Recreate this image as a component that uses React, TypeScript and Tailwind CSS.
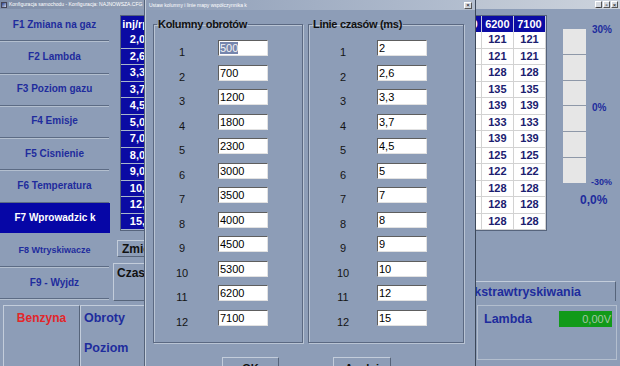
import React from 'react';

const rpm = [500, 700, 1200, 1800, 2300, 3000, 3500, 4000, 4500, 5300, 6200, 7100];
const inj = ['2,00', '2,60', '3,30', '3,70', '4,50', '5,00', '7,00', '8,00', '9,00', '10,0', '12,0', '15,0'];
const base = [121, 121, 128, 135, 139, 133, 139, 125, 122, 128, 128, 128];
const times = ['2', '2,6', '3,3', '3,7', '4,5', '5', '7', '8', '9', '10', '12', '15'];

const menu = [
  { label: 'F1 Zmiana na gaz', size: 'text-[10px]' },
  { label: 'F2 Lambda', size: 'text-[10px]' },
  { label: 'F3 Poziom gazu', size: 'text-[10px]' },
  { label: 'F4 Emisje', size: 'text-[10px]' },
  { label: 'F5 Cisnienie', size: 'text-[10px]' },
  { label: 'F6 Temperatura', size: 'text-[10px]' },
  { label: 'F7 Wprowadzic k', size: 'text-[10px]', active: true },
  { label: 'F8 Wtryskiwacze', size: 'text-[9px]' },
  { label: 'F9 - Wyjdz', size: 'text-[10px]' },
];

const TitleBar = () => (
  <div className="h-[9px] flex items-center bg-linear-to-r from-[#7e8da7] via-[#aab5c6] to-[#ccd3dd] pl-[1px] pr-[2px]">
    <span className="w-[6px] h-[6px] bg-linear-to-br from-[#2a3f8f] to-[#d8dde6] border border-[#445]" />
    <span className="ml-[2px] text-[5px] leading-none text-white whitespace-nowrap">
      Konfiguracja samochodu - Konfiguracja: NAJNOWSZA.CFG
    </span>
    <div className="ml-auto flex gap-px">
      {['_', '▫', '×'].map((g) => (
        <span
          key={g}
          className="w-[7px] h-[7px] flex items-center justify-center bg-[#d4d8de] border border-t-white border-l-white border-r-[#555] border-b-[#555] text-[6px] leading-none text-black"
        >
          {g}
        </span>
      ))}
    </div>
  </div>
);

const MapTable = () => (
  <div className="w-[427px] border border-[#56647c] bg-[#8d9db7]">
    <div className="grid grid-cols-[40px_repeat(12,minmax(0,1fr))] text-[11px] leading-none font-bold">
      <div className="h-[16px] flex items-center justify-center bg-[#0b0ba3] text-white border-r border-[#9fb0c8] whitespace-nowrap overflow-hidden">
        inj/rpm
      </div>
      {rpm.map((r) => (
        <div
          key={r}
          className="h-[16px] flex items-center justify-center bg-[#0b0ba3] text-white border-r border-[#c9cde0]"
        >
          {r}
        </div>
      ))}
      {inj.map((v, i) => (
        <React.Fragment key={v}>
          <div className="h-[16.5px] flex items-center justify-center bg-[#0b0ba3] text-white border-r border-b border-[#a9b6cc]">
            {v}
          </div>
          {rpm.map((r, j) => (
            <div
              key={r}
              className="h-[16.5px] flex items-center justify-center bg-white text-[#1b2070] border-r border-b border-[#d2d2d2]"
            >
              {j >= 9 ? base[i] : base[i] - (10 - j) * 3}
            </div>
          ))}
        </React.Fragment>
      ))}
    </div>
  </div>
);

const Gauge = () => (
  <div className="ml-[16px] mt-[8px] flex flex-col">
    <div className="flex items-start">
      <div className="mt-[6px] w-[23px] h-[154px] flex flex-col bg-[#e6e6e6]">
        {[0, 1, 2, 3, 4, 5].map((s) => (
          <div key={s} className="flex-1 border-b border-[#8e98a8] last:border-b-0" />
        ))}
      </div>
      <div className="ml-[6px] h-[166px] flex flex-col justify-between text-[#1e2c9d] font-bold leading-[14px]">
        <span className="text-[10px]">30%</span>
        <span className="text-[10px] pt-[3px]">0%</span>
        <span className="text-[9px] -ml-px">-30%</span>
      </div>
    </div>
    <div className="mt-[4px] pl-[17px] text-[12px] leading-[14px] font-bold text-[#1e2c9d]">0,0%</div>
  </div>
);

const Raised = 'border border-t-[#c3cddb] border-l-[#c3cddb] border-r-[#56647a] border-b-[#56647a]';

const Field = ({ value, selected }: { value: string; selected?: boolean }) => (
  <div className="w-[50px] h-[16px] bg-white border border-t-[#5e5e5e] border-l-[#5e5e5e] border-r-[#e2e2e2] border-b-[#e2e2e2] pl-[1px] text-[11px] leading-[14px] text-black">
    {selected ? <span className="bg-[#7686ad] text-[#f4f4f4]">{value}</span> : value}
  </div>
);

const Group = ({
  title,
  values,
  width,
  labelWidth,
}: {
  title: string;
  values: string[];
  width: string;
  labelWidth: string;
}) => (
  <fieldset
    className={`${width} h-[325px] border border-[#5b6982] shadow-[inset_1px_1px_0_#b9c4d4,1px_1px_0_#b9c4d4] p-0 m-0`}
  >
    <legend className="ml-[3px] px-px text-[11px] leading-[13px] font-bold text-[#111] tracking-[-0.3px]">{title}</legend>
    <div className="pt-[9px] flex flex-col">
      {values.map((v, i) => (
        <div key={i} className="h-[24.5px] flex items-start">
          <span className={`${labelWidth} pt-[5px] text-center text-[11px] leading-[14px] text-[#141414]`}>{i + 1}</span>
          <Field value={v} selected={i === 0 && title.startsWith('Kol')} />
        </div>
      ))}
    </div>
  </fieldset>
);

const SettingsDialog = () => (
  <div className="absolute left-[145px] top-0 w-[331px] h-[390px] flex flex-col bg-[#8d9db7] border-l border-l-[#c4cedb] border-r border-r-[#3c485a] shadow-[-1px_0_0_#55637a]">
    <div className="h-[10px] flex items-center bg-linear-to-r from-[#8f9eb7] to-[#b4bfd0] pl-[3px] pr-[3px]">
      <span className="text-[5px] leading-none text-white whitespace-nowrap">Ustaw kolumny i linie mapy współczynnika k</span>
      <span className="ml-auto w-[8px] h-[7px] flex items-center justify-center bg-[#d4d8de] border border-t-white border-l-white border-r-[#555] border-b-[#555] text-[6px] leading-none text-black">
        ×
      </span>
    </div>
    <div className="flex gap-[5px] pl-[7px] mt-[8px]">
      <Group title="Kolumny obrotów" values={rpm.map(String)} width="w-[150px]" labelWidth="w-[56px] mr-[8px]" />
      <Group title="Linie czasów (ms)" values={times} width="w-[156px]" labelWidth="w-[68px]" />
    </div>
    <div className="flex gap-[54px] pl-[76px] mt-[14px]">
      <button className={`w-[57px] h-[26px] ${Raised} bg-[#8d9db7] pt-[4px] self-start flex justify-center text-[11px] leading-[13px] font-bold text-[#111]`}>
        OK
      </button>
      <button className={`w-[58px] h-[26px] ${Raised} bg-[#8d9db7] pt-[4px] self-start flex justify-center text-[11px] leading-[13px] font-bold text-[#111]`}>
        Anuluj
      </button>
    </div>
  </div>
);

export default function App() {
  return (
    <div className="relative w-[620px] h-[366px] overflow-hidden bg-[#8d9db7] font-['Liberation_Sans',Arial,sans-serif]">
      <TitleBar />
      <div className="flex h-[294px]">
        <nav className="w-[110px] flex flex-col leading-[12px]">
          {menu.map((m) =>
            m.active ? (
              <div key={m.label} className="h-[32.25px] pb-[2px]">
                <div className={`h-full flex items-center justify-center bg-[#0606a6] text-white font-bold ${m.size}`}>
                  {m.label}
                </div>
              </div>
            ) : (
              <div
                key={m.label}
                className={`h-[32.25px] w-[109px] flex items-center justify-center border-b border-[#5c6b84] shadow-[0_1px_0_#b3bfcf] text-[#1f2c9d] font-bold ${m.size}`}
              >
                {m.label}
              </div>
            ),
          )}
        </nav>
        <div className="flex-1 flex flex-col">
          <div className="h-[220px] flex items-start pt-[6px] pl-[10px]">
            <MapTable />
            <Gauge />
          </div>
          <div className="flex-1 flex pl-[3px]">
            <div className="w-[120px] flex flex-col">
              <button className={`ml-[4px] mt-[11px] w-[80px] h-[17px] ${Raised} bg-[#8d9db7] text-left pl-[4px] text-[12px] leading-[14px] font-bold text-[#111]`}>
                Zmień
              </button>
              <div className={`mt-[6px] h-[38px] ${Raised} pl-[3px] pt-[2px] text-[12px] leading-[14px] font-bold text-[#111]`}>
                Czas
              </div>
            </div>
            <div className="flex-1 flex flex-col justify-end pb-[2px] pr-[4px] pl-[8px]">
              <div className="h-[20px] flex items-center justify-end pr-[34px] border-t border-r border-t-[#c3cddb] border-r-[#56647a] text-[12.4px] leading-[14px] font-bold text-[#1e2c9d]">
                Czas ekstrawtryskiwania
              </div>
            </div>
          </div>
        </div>
      </div>
      <div className="h-[63px] flex pt-[2px]">
        <div className={`ml-[3px] w-[77px] h-[70px] ${Raised} pt-[5px] text-center text-[12px] leading-[14px] font-bold text-[#e3262a]`}>
          Benzyna
        </div>
        <div className={`w-[200px] h-[70px] ${Raised} pl-[3px] pt-[5px] flex flex-col gap-[16px] text-[12.5px] leading-[14px] font-bold text-[#1e2c9d]`}>
          <span>Obroty</span>
          <span>Poziom</span>
        </div>
        <div className="ml-auto mr-[3px] w-[140px] h-[55px] border border-[#b3bece] flex items-start justify-between pl-[6px] pr-[4px]">
          <span className="mt-[6px] text-[12.5px] leading-[14px] font-bold text-[#1e2c9d]">Lambda</span>
          <span className="mt-[5px] w-[53px] h-[16px] bg-[#119a19] text-right pr-[1px] text-[11px] leading-[16px] text-[#a3c8a3]">0,00V</span>
        </div>
      </div>
      <SettingsDialog />
    </div>
  );
}
